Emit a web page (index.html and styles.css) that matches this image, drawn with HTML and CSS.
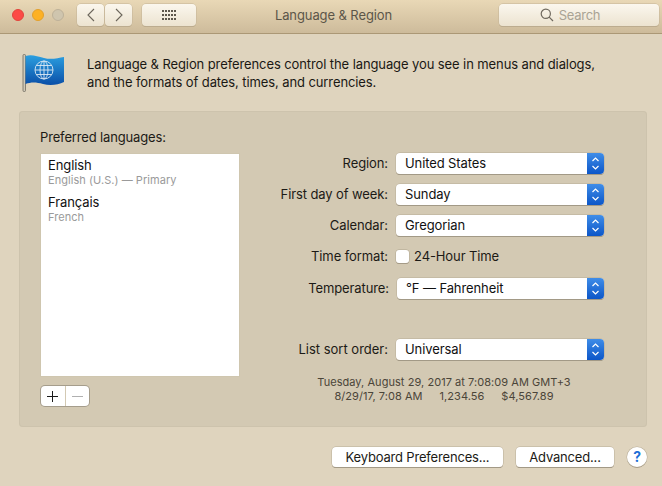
FILE: index.html
```html
<!DOCTYPE html>
<html lang="en">
<head>
<meta charset="utf-8">
<title>Language &amp; Region</title>
<link rel="stylesheet" href="styles.css">
</head>
<body>
<div class="window">
  <header class="titlebar">
    <div class="lights">
      <span class="light light-red"></span>
      <span class="light light-yellow"></span>
      <span class="light light-off"></span>
    </div>
    <div class="nav">
      <button class="tool nav-btn" type="button"><svg width="10" height="16" viewBox="0 0 10 16"><path d="M8 2 2 8l6 6" class="chev"/></svg></button>
      <button class="tool nav-btn" type="button"><svg width="10" height="16" viewBox="0 0 10 16"><path d="M2 2 8 8l-6 6" class="chev"/></svg></button>
    </div>
    <button class="tool grid-btn" type="button">
      <svg width="15" height="11" viewBox="0 0 15 11" class="dots">
        <rect x="0" y="0" width="2" height="2"/><rect x="3" y="0" width="2" height="2"/><rect x="6" y="0" width="2" height="2"/><rect x="9" y="0" width="2" height="2"/><rect x="12" y="0" width="2" height="2"/>
        <rect x="0" y="4" width="2" height="2"/><rect x="3" y="4" width="2" height="2"/><rect x="6" y="4" width="2" height="2"/><rect x="9" y="4" width="2" height="2"/><rect x="12" y="4" width="2" height="2"/>
        <rect x="0" y="8" width="2" height="2"/><rect x="3" y="8" width="2" height="2"/><rect x="6" y="8" width="2" height="2"/><rect x="9" y="8" width="2" height="2"/><rect x="12" y="8" width="2" height="2"/>
      </svg>
    </button>
    <div class="title">Language &amp; Region</div>
    <div class="tool search">
      <svg width="14" height="14" viewBox="0 0 14 14"><circle cx="5.800" cy="5.800" r="4.600" class="lens"/><path d="M9.200 9.200 13 13" class="lens"/></svg>
      <span>Search</span>
    </div>
  </header>

  <main class="content">
    <section class="intro">
      <svg class="flag" width="44" height="40" viewBox="0 0 44 40">
        <defs>
          <linearGradient id="flagFill" x1="0" y1="0" x2="0" y2="1">
            <stop offset="0" stop-color="#2b9fe0"/>
            <stop offset="1" stop-color="#0a4fa8"/>
          </linearGradient>
        </defs>
        <rect x="1" y="0.500" width="2.500" height="37" rx="1" fill="#cfc9b8" stroke="#6f6a5e" stroke-width="0.800"/>
        <path d="M3.500 2C9 0 15 2 22 4S36 4 42 3V28C36 31 28 32 21 30S9 28 3.500 30z" fill="url(#flagFill)"/>
        <g fill="none" stroke="#dbe9f4" stroke-width="0.900">
          <circle cx="22" cy="16" r="9"/>
          <ellipse cx="22" cy="16" rx="4" ry="9"/>
          <path d="M22 7v18M13 16h18M14.300 11.500h15.400M14.300 20.500h15.400"/>
        </g>
      </svg>
      <p class="intro-text">Language &amp; Region preferences control the language you see in menus and dialogs,<br>and the formats of dates, times, and currencies.</p>
    </section>

    <section class="group">
      <div class="languages">
        <div class="languages-label">Preferred languages:</div>
        <ul class="lang-list">
          <li class="lang"><span class="lang-name">English</span><span class="lang-sub">English (U.S.) — Primary</span></li>
          <li class="lang"><span class="lang-name">Français</span><span class="lang-sub">French</span></li>
        </ul>
        <div class="stepper">
          <button class="step" type="button"><svg width="11" height="11" viewBox="0 0 11 11"><path d="M5.500 0v11M0 5.500h11" class="plus"/></svg></button>
          <button class="step" type="button"><svg width="11" height="11" viewBox="0 0 11 11"><path d="M0 5.500h11" class="minus"/></svg></button>
        </div>
      </div>

      <div class="settings">
        <div class="form">
          <div class="row">
            <span class="row-label">Region:</span>
            <div class="select"><span class="select-value">United States</span><span class="arrows"><svg width="9" height="15" viewBox="0 0 9 15"><path d="M1.500 5 4.500 2l3 3M1.500 10l3 3 3-3" class="updown"/></svg></span></div>
          </div>
          <div class="row">
            <span class="row-label">First day of week:</span>
            <div class="select"><span class="select-value">Sunday</span><span class="arrows"><svg width="9" height="15" viewBox="0 0 9 15"><path d="M1.500 5 4.500 2l3 3M1.500 10l3 3 3-3" class="updown"/></svg></span></div>
          </div>
          <div class="row">
            <span class="row-label">Calendar:</span>
            <div class="select"><span class="select-value">Gregorian</span><span class="arrows"><svg width="9" height="15" viewBox="0 0 9 15"><path d="M1.500 5 4.500 2l3 3M1.500 10l3 3 3-3" class="updown"/></svg></span></div>
          </div>
          <div class="row row-check">
            <span class="row-label">Time format:</span>
            <label class="check"><span class="box"></span><span class="check-text">24-Hour Time</span></label>
          </div>
          <div class="row row-temp">
            <span class="row-label">Temperature:</span>
            <div class="select"><span class="select-value">°F — Fahrenheit</span><span class="arrows"><svg width="9" height="15" viewBox="0 0 9 15"><path d="M1.500 5 4.500 2l3 3M1.500 10l3 3 3-3" class="updown"/></svg></span></div>
          </div>
          <div class="row row-sort">
            <span class="row-label">List sort order:</span>
            <div class="select"><span class="select-value">Universal</span><span class="arrows"><svg width="9" height="15" viewBox="0 0 9 15"><path d="M1.500 5 4.500 2l3 3M1.500 10l3 3 3-3" class="updown"/></svg></span></div>
          </div>
        </div>
        <div class="sample">
          <div>Tuesday, August 29, 2017 at 7:08:09 AM GMT+3</div>
          <div class="sample-values"><span>8/29/17, 7:08 AM</span><span>1,234.56</span><span>$4,567.89</span></div>
        </div>
      </div>
    </section>

    <footer class="actions">
      <button class="btn btn-keyboard" type="button">Keyboard Preferences...</button>
      <button class="btn btn-advanced" type="button">Advanced...</button>
      <button class="help" type="button">?</button>
    </footer>
  </main>
</div>
</body>
</html>
```

FILE: styles.css
```css
* { box-sizing: border-box; }

html, body {
  margin: 0;
  padding: 0;
}

body {
  width: 662px;
  height: 486px;
  overflow: hidden;
  background: #dfd4be;
  color: #1c1a16;
  font-family: "Inter", "Liberation Sans", sans-serif;
  font-size: 13px;
  letter-spacing: -0.1px;
}

button {
  font: inherit;
  letter-spacing: inherit;
  color: inherit;
  padding: 0;
  margin: 0;
  border: 0;
}

/* Title bar */
.titlebar {
  display: flex;
  align-items: flex-start;
  height: 34px;
  padding: 4px 3px 0 12px;
  background: linear-gradient(#e9d8b6, #cdbb9b);
  border-bottom: 1px solid #ab9876;
}

.lights {
  display: flex;
  gap: 8px;
  margin-top: 5px;
}

.light {
  width: 12px;
  height: 12px;
  border-radius: 50%;
}

.light-red { background: #fc4b46; border: 1px solid #e2453c; }
.light-yellow { background: #fdb125; border: 1px solid #e3a02c; }
.light-off { background: #cfc5ae; border: 1px solid #bdb199; }

.tool {
  height: 22px;
  border-radius: 4px;
  background: linear-gradient(#fbf7ee, #ece3d0);
  box-shadow: 0 0 0 0.5px #c3b497, 0 1px 0 #b5a486;
}

.nav {
  display: flex;
  gap: 1px;
  margin-left: 13px;
}

.nav-btn {
  width: 27px;
  display: flex;
  align-items: center;
  justify-content: center;
}

.chev {
  fill: none;
  stroke: #6c665b;
  stroke-width: 1.100;
}

.grid-btn {
  width: 54px;
  margin-left: 10px;
  display: flex;
  align-items: center;
  justify-content: center;
}

.dots { fill: #5d574c; }

.title {
  flex: 1;
  padding: 3px 28px 0 0;
  text-align: center;
  color: #5c5649;
  font-size: 13px;
  line-height: 16px;
}

.search {
  width: 160px;
  display: flex;
  align-items: center;
  justify-content: center;
  gap: 5px;
  color: #a9a394;
  padding-right: 18px;
  letter-spacing: -0.3px;
}

.lens {
  fill: none;
  stroke: #6f695e;
  stroke-width: 1.200;
}

/* Content */
.content {
  padding: 0 15px 0 19px;
}

.intro {
  display: flex;
  height: 77px;
  padding: 20px 0 0 3px;
}

.flag {
  margin-right: 21px;
  flex: none;
}

.intro-text {
  margin: 1px 0 0;
  line-height: 18px;
  color: #1a1814;
  white-space: nowrap;
}

/* Group box */
.group {
  display: flex;
  height: 316px;
  padding: 17px 0 0 21px;
  background: #d3c9b3;
  border-radius: 4px;
  box-shadow: inset 0 0 0 1px #cdc3ad;
}

.languages {
  width: 200px;
  flex: none;
}

.languages-label {
  height: 17px;
  padding-top: 1px;
  line-height: 16px;
  margin-bottom: 8px;
  letter-spacing: -0.15px;
}

.lang-list {
  list-style: none;
  margin: 0;
  padding: 4px 0 0 7px;
  height: 224px;
  background: #fff;
  border: 1px solid #cfc6af;
}

.lang {
  display: flex;
  flex-direction: column;
  height: 37px;
}

.lang-name {
  line-height: 15px;
  color: #111;
}

.lang-sub {
  font-size: 11px;
  line-height: 14px;
  color: #9a9a9a;
  letter-spacing: 0.05px;
}

.stepper {
  display: flex;
  width: 48px;
  height: 20px;
  margin: 9px 0 0 1px;
  background: #fff;
  border-radius: 4px;
  box-shadow: 0 0 0 1px #a59d8c;
}

.step {
  flex: 1;
  display: flex;
  align-items: center;
  justify-content: center;
  background: none;
}

.step + .step {
  border-left: 1px solid #d3c9b3;
}

.plus { fill: none; stroke: #1a1a1a; stroke-width: 1; }
.minus { fill: none; stroke: #b0b0b0; stroke-width: 1; }

/* Settings */
.settings {
  width: 364px;
  flex: none;
}

.form {
  display: flex;
  flex-direction: column;
  gap: 10px;
  padding-top: 25px;
}

.row {
  display: flex;
  align-items: center;
  height: 21px;
}

.row-label {
  width: 148px;
  text-align: right;
  margin-right: 8px;
  white-space: nowrap;
  padding-bottom: 2px;
}

.row-check { height: 21px; }

.row-temp {
  margin-top: 1px;
  padding-left: 1px;
}

.row-sort { margin-top: 30px; }

.row-sort .row-label { letter-spacing: 0; }

.select {
  flex: 1;
  display: flex;
  align-items: center;
  height: 21px;
  background: #fff;
  border-radius: 4px;
  box-shadow: 0 0 0 0.5px #b8ad97, 0 1px 0 #8d8575;
  overflow: hidden;
}

.select-value {
  flex: 1;
  padding: 0 0 2px 9px;
  color: #111;
}

.arrows {
  width: 17px;
  height: 100%;
  display: flex;
  align-items: center;
  justify-content: center;
  background: linear-gradient(#3f8de8, #0c56c8);
}

.updown {
  fill: none;
  stroke: #fff;
  stroke-width: 1.200;
}

.check {
  display: flex;
  align-items: center;
  gap: 5px;
}

.check-text { padding-bottom: 2px; }

.box {
  width: 13px;
  height: 13px;
  background: #fff;
  border-radius: 3px;
  box-shadow: 0 0 0 0.5px #b0a690, 0 1px 0 #9b917e;
}

.sample {
  margin: 15px 0 0 44px;
  width: 320px;
  text-align: center;
  font-size: 11px;
  line-height: 14px;
  letter-spacing: 0.05px;
  color: #4b4539;
}

.sample-values {
  display: flex;
  justify-content: center;
  gap: 17px;
}

/* Footer */
.actions {
  display: flex;
  align-items: center;
  justify-content: flex-end;
  height: 20px;
  margin-top: 20px;
}

.btn {
  height: 20px;
  background: #fff;
  border-radius: 4px;
  box-shadow: 0 0 0 0.5px #b8ad97, 0 1px 0 #8d8575;
  text-align: center;
  letter-spacing: -0.18px;
}

.btn-keyboard { width: 171px; }
.btn-advanced { width: 98px; margin-left: 13px; }

.help {
  width: 20px;
  height: 20px;
  margin-left: 13px;
  border-radius: 50%;
  background: #fff;
  color: #1c6fd6;
  font-weight: 700;
  font-size: 14px;
  line-height: 20px;
  box-shadow: 0 0 0 0.5px #b8ad97, 0 1px 0 #9b917e;
}
```
